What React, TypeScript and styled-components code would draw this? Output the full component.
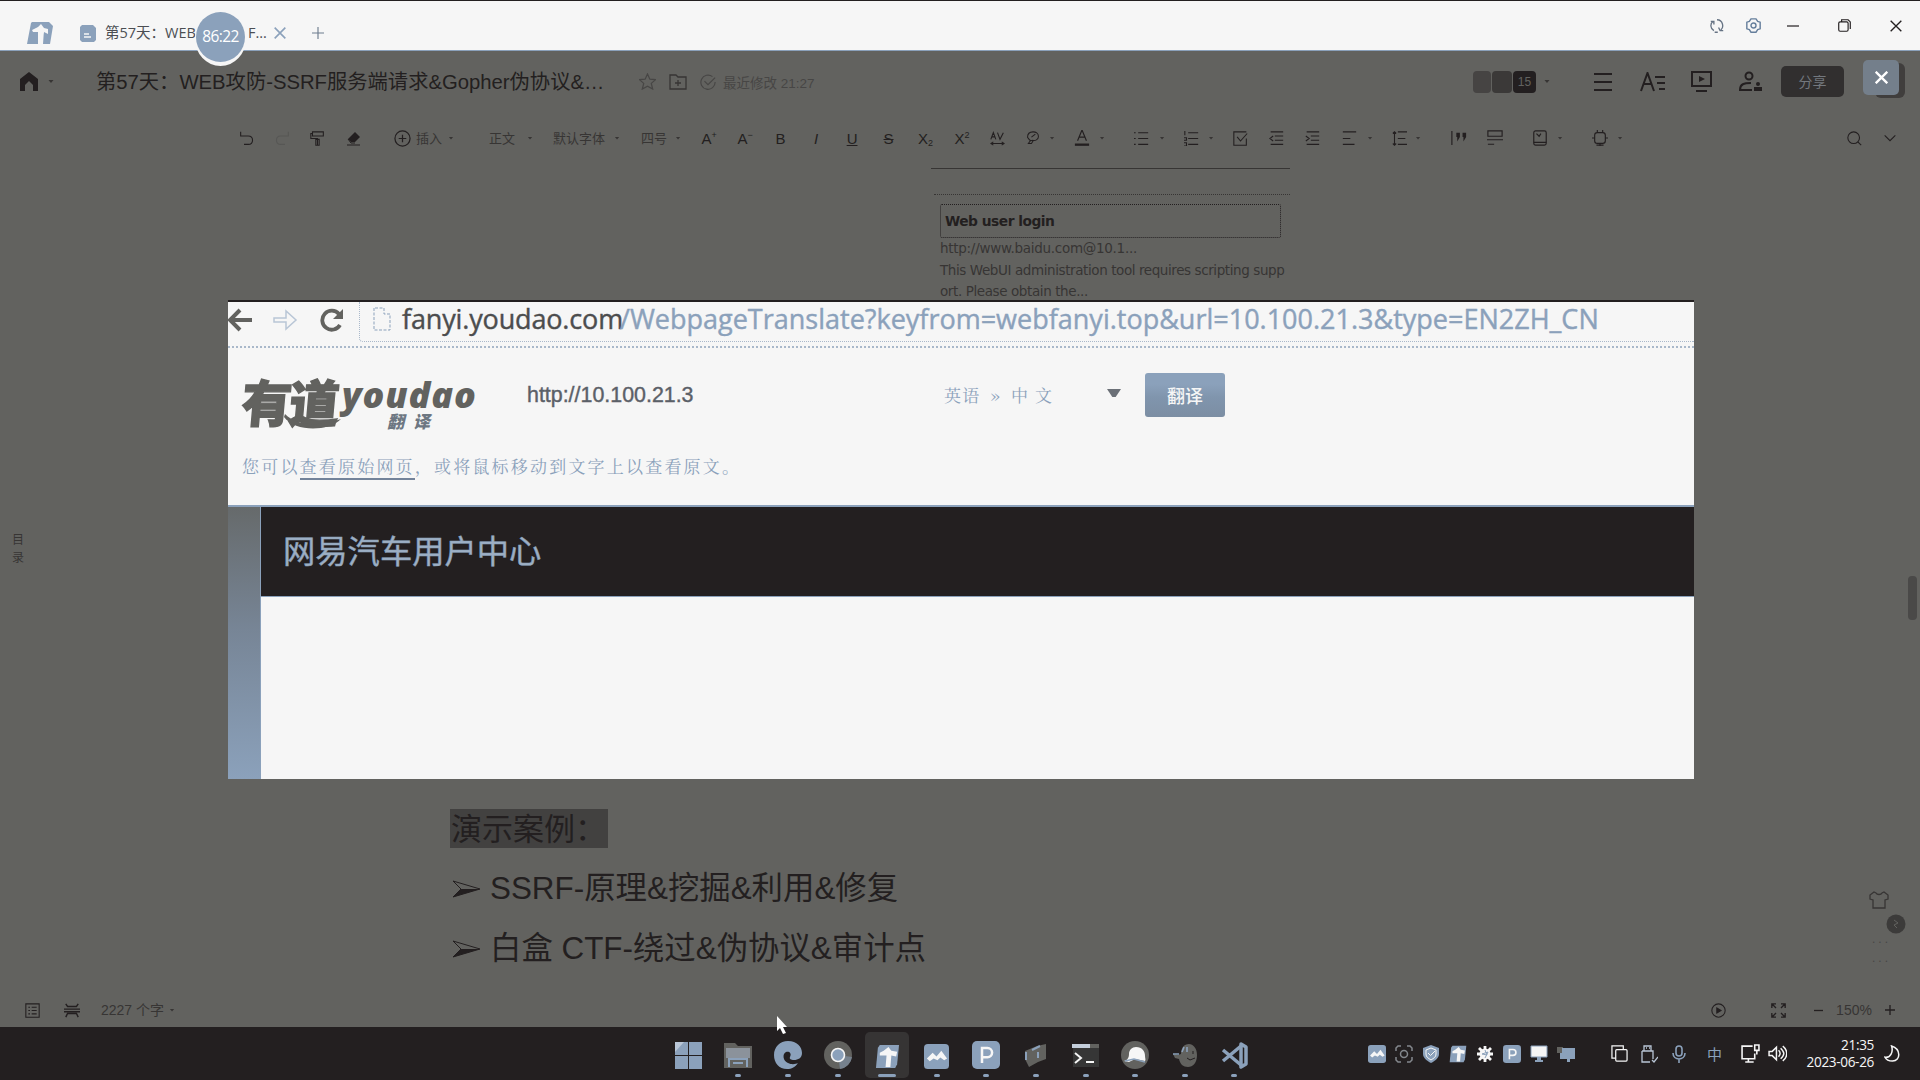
import React from "react";
import styled, { createGlobalStyle } from "styled-components";

const c = {
  ink: "#231f20",
  soft: "#373534",
  faint: "#474645",
  gray: "#62625f",
  blue: "#8ba1bb",
  light: "#f6f6f6",
  white: "#ffffff",
};
const cjk = `"Noto Sans CJK SC", sans-serif`;

const Global = createGlobalStyle`
  * { box-sizing: border-box; }
  html, body { margin: 0; padding: 0; overflow: hidden; background: ${c.gray}; }
  body { font-family: "Liberation Sans", ${cjk}; color: ${c.ink}; }
  svg { display: block; flex: none; }
`;

const Screen = styled.div`
  position: relative;
  width: 1920px;
  height: 1080px;
  display: flex;
  flex-direction: column;
  overflow: hidden;
  background: ${c.gray};
  white-space: nowrap;
`;

/* ---------- icon helper ---------- */
type IconProps = {
  w?: number;
  h?: number;
  box?: string;
  color?: string;
  stroke?: number;
  children: React.ReactNode;
};
const Icon = ({ w = 18, h, box = "0 0 18 18", color = c.ink, stroke = 1.3, children }: IconProps) => (
  <svg width={w} height={h ?? w} viewBox={box} fill="none" stroke={color} strokeWidth={stroke}>
    {children}
  </svg>
);
const Caret = styled.i<{ $gap?: number }>`
  width: 6px;
  height: 3px;
  margin-left: ${(p) => p.$gap ?? 0}px;
  flex: none;
  background: ${c.soft};
  clip-path: polygon(8% 0, 92% 0, 50% 100%);
`;

/* ---------- title bar ---------- */
const TitleBar = styled.header`
  display: flex;
  align-items: center;
  height: 51px;
  padding: 0 18px 0 27px;
  background: ${c.light};
  border-top: 1px solid ${c.ink};
  border-bottom: 1px solid ${c.blue};
`;
const Tab = styled.div`
  display: flex;
  align-items: center;
  margin: 15px 0 0 27px;
  font: 14.5px/20px "Open Sans", ${cjk};
  color: #4b4e53;
`;
const TabName = styled.span`
  width: 143px;
  margin-left: 9px;
`;
const TabTail = styled.span`
  width: 26px;
`;
const LogoBox = styled.div`
  margin-top: 14px;
`;
const PlusBox = styled.div`
  margin: 14px 0 0 26px;
`;
const WindowButtons = styled.div`
  display: flex;
  align-items: center;
  margin: 0 0 0 auto;
`;
const WinButton = styled.div<{ $w: number; $gap?: number }>`
  display: flex;
  justify-content: center;
  width: ${(p) => p.$w}px;
  margin-left: ${(p) => p.$gap ?? 0}px;
`;
const Timer = styled.div`
  position: absolute;
  left: 195px;
  top: 12px;
  width: 51px;
  height: 54px;
  border-radius: 50%;
  background: ${c.light};
  display: flex;
  justify-content: center;
`;
const TimerFace = styled.div`
  width: 49px;
  height: 50px;
  border-radius: 50%;
  background: ${c.blue};
  color: ${c.white};
  text-align: center;
  font: 15.5px/49px "Open Sans", sans-serif;
  letter-spacing: -0.6px;
`;

const TLogo = ({ size = 26, bg = c.blue, fg = c.light }) => (
  <svg width={size} height={size} viewBox="0 0 26 26">
    <path d="M5 1h20l-2 20-2 4H1L3 4z" fill={bg} />
    <path d="M5 9l4-2 5-4 3 4 6 1-1 5-5-1-1 12h-5l1-12H5z" fill={fg} />
  </svg>
);

/* ---------- document header ---------- */
const DocHeader = styled.div`
  display: flex;
  align-items: center;
  height: 61px;
  margin-bottom: 1px;
  padding: 0 76px 0 19px;
`;
const DocTitle = styled.h1`
  margin: 0 0 0 42px;
  width: 543px;
  font: 400 20.3px/28px "Liberation Sans", ${cjk};
`;
const Meta = styled.div`
  display: flex;
  align-items: center;
  gap: 13px;
  color: ${c.faint};
  font-size: 13.5px;
`;
const MetaText = styled.span`
  margin-left: -6px;
`;
const HeaderActions = styled.div`
  display: flex;
  align-items: center;
  margin-left: auto;
`;
const Avatar = styled.span<{ $tone: string; $w: number }>`
  width: ${(p) => p.$w}px;
  height: 22px;
  margin-right: 1px;
  border-radius: 4px;
  background: ${(p) => p.$tone};
  color: ${c.gray};
  text-align: center;
  font: 12px/22px "Liberation Sans", sans-serif;
`;
const ActionIcon = styled.span<{ $gap: number }>`
  display: flex;
  margin-left: ${(p) => p.$gap}px;
`;
const Share = styled.button`
  width: 63px;
  height: 31px;
  margin: 0 0 0 18px;
  padding: 0;
  border: 0;
  border-radius: 5px;
  background: #312f2f;
  color: #73787e;
  font: 14px/29px ${cjk};
`;
const CloseOverlay = styled.div`
  position: absolute;
  left: 1863px;
  top: 60px;
  width: 36px;
  height: 35px;
  border-radius: 5px;
  background: #747f8b;
  display: flex;
  align-items: center;
  justify-content: center;
`;
const AvatarEdge = styled.div`
  position: absolute;
  left: 1875px;
  top: 63px;
  width: 30px;
  height: 35px;
  border-radius: 6px;
  background: #403e3d;
`;

/* ---------- toolbar ---------- */
const Toolbar = styled.div`
  display: flex;
  align-items: center;
  height: 50px;
  padding: 0 12px 0 228px;
  font: 13px/18px ${cjk};
  color: ${c.soft};
`;
const Tool = styled.span<{ $gap?: number; $w?: number }>`
  display: flex;
  justify-content: center;
  align-items: center;
  width: ${(p) => p.$w ?? 36}px;
  margin-left: ${(p) => p.$gap ?? 0}px;
  flex: none;
`;
const ToolText = styled.span<{ $gap: number }>`
  margin-left: ${(p) => p.$gap}px;
`;
const Glyph = styled.span<{ $italic?: boolean; $line?: string }>`
  font: ${(p) => (p.$italic ? "italic" : "normal")} 400 15px/17px "Liberation Sans", sans-serif;
  text-decoration: ${(p) => p.$line ?? "none"};
  color: ${c.ink};
  sup, sub { font-size: 9px; line-height: 0; }
  sub { vertical-align: -2px; }
  sup { vertical-align: 6px; }
`;
const SearchGroup = styled.span`
  display: flex;
  margin-left: auto;
`;

/* ---------- page ---------- */
const Page = styled.main`
  display: flex;
  flex-direction: column;
  flex: 1;
`;
const LinkCards = styled.section`
  width: 359px;
  height: 646px;
  margin-left: 931px;
  font: 13.5px/21.5px "DejaVu Sans", sans-serif;
  color: ${c.soft};
`;
const CardEnd = styled.div`
  height: 6px;
  border-bottom: 1px solid ${c.soft};
`;
const Card = styled.article`
  margin: 25px 0 0 3px;
  padding: 9px 0 0 6px;
  border-top: 1px dotted ${c.soft};
`;
const CardTitle = styled.h2`
  width: 341px;
  height: 34px;
  margin: 0;
  padding-left: 4px;
  border: 1px dotted ${c.ink};
  border-radius: 2px;
  font: 700 13.8px/33px "DejaVu Sans", sans-serif;
  letter-spacing: -0.5px;
  color: ${c.ink};
`;
const CardLine = styled.p<{ $track: number }>`
  margin: 0;
  letter-spacing: ${(p) => p.$track}px;
`;
const Article = styled.section`
  padding-left: 450px;
`;
const Highlight = styled.h2`
  width: 158px;
  height: 39px;
  margin: 0 0 11px;
  padding-left: 1px;
  background: #424140;
  font: 400 31px/35px ${cjk};
`;
const Bullet = styled.div`
  display: flex;
  align-items: center;
  height: 60px;
  padding-left: 2px;
  gap: 9px;
  font: 400 31.4px/40px "Liberation Sans", ${cjk};
`;
const StatusBar = styled.footer`
  display: flex;
  align-items: center;
  height: 34px;
  padding: 0 25px 0 25px;
  font: 14px/20px "Liberation Sans", ${cjk};
  color: ${c.soft};
`;
const Count = styled.span`
  margin-left: 21px;
  letter-spacing: 0px;
`;
const Zoom = styled.div`
  display: flex;
  align-items: center;
  margin-left: auto;
`;
const Percent = styled.span`
  width: 44px;
  margin-left: 9px;
  text-align: center;
`;

/* ---------- floating parts ---------- */
const Outline = styled.nav`
  position: absolute;
  left: 2px;
  top: 523px;
  width: 32px;
  height: 50px;
  display: flex;
  flex-direction: column;
  align-items: center;
  justify-content: center;
  font: 12px/18px ${cjk};
  color: ${c.soft};
`;
const Thumb = styled.div`
  position: absolute;
  left: 1908px;
  top: 576px;
  width: 9px;
  height: 44px;
  border-radius: 4px;
  background: #4a4948;
`;
const Helpers = styled.aside`
  position: absolute;
  left: 1869px;
  top: 891px;
  width: 40px;
  height: 82px;
  display: flex;
  flex-direction: column;
`;
const GlobeBox = styled.div`
  margin: 5px 0 2px 17px;
`;
const Dots = styled.div`
  height: 27px;
  color: ${c.faint};
  font: 12px/6px "Liberation Sans", sans-serif;
  letter-spacing: 3px;
  padding-left: 3px;
`;
const Pointer = styled.div`
  position: absolute;
  left: 776px;
  top: 1015px;
`;

/* ---------- picture viewer ---------- */
const Viewer = styled.section`
  position: absolute;
  left: 228px;
  top: 300px;
  width: 1466px;
  height: 479px;
  border-top: 2px solid ${c.ink};
  background: ${c.light};
  display: flex;
  flex-direction: column;
`;
const AddressRow = styled.div`
  display: flex;
  align-items: center;
  height: 46px;
  padding-bottom: 4px;
  border-bottom: 2px dotted #a9b8ca;
`;
const NavIcons = styled.div`
  display: flex;
  align-items: center;
  gap: 21px;
  width: 131px;
  height: 40px;
  padding-bottom: 4px;
`;
const Address = styled.div`
  display: flex;
  align-items: center;
  flex: 1;
  height: 40px;
  padding: 0 0 5px 13px;
  border: 0 dotted #a9b8ca;
  border-width: 0 0 1px 1px;
  border-radius: 0 0 0 4px;
  color: ${c.blue};
  font: 27px/34px "Open Sans", sans-serif;
`;
const Host = styled.span`
  width: 218px;
  margin-left: 11px;
  color: #4c4d4e;
  letter-spacing: -0.15px;
  -webkit-text-stroke: 0.4px #4c4d4e;
`;
const Path = styled.span`
  letter-spacing: 0;
  -webkit-text-stroke: 0.4px ${c.blue};
`;
const YoudaoRow = styled.div`
  display: flex;
  align-items: flex-start;
  height: 104px;
  padding: 25px 0 0 14px;
`;
const Logo = styled.div`
  position: relative;
  display: flex;
  width: 285px;
  height: 62px;
  color: ${c.gray};
`;
const LogoCn = styled.span`
  font: 900 50px/55px ${cjk};
  letter-spacing: -2.5px;
  -webkit-text-stroke: 1.4px ${c.gray};
  width: 99px;
  height: 58px;
  transform: skewX(-5deg);
`;
const LogoEn = styled.span`
  margin: 5px 0 0 1px;
  height: 30px;
  font: italic 800 36px/34px "Open Sans", sans-serif;
  letter-spacing: 0.9px;
`;
const LogoSub = styled.span`
  position: absolute;
  left: 145px;
  top: 38px;
  font: italic 900 17px/20px ${cjk};
  letter-spacing: 9px;
  color: #6d7782;
`;
const Swoosh = styled.svg`
  position: absolute;
  left: 42px;
  top: 38px;
`;
const SiteUrl = styled.span`
  width: 404px;
  padding-top: 8px;
  font: 21.4px/28px "Liberation Sans", sans-serif;
  color: #5b6068;
  -webkit-text-stroke: 0.4px #5b6068;
`;
const Select = styled.div`
  display: flex;
  align-items: center;
  width: 200px;
  height: 44px;
  margin: 0 14px 0 0;
  padding: 0 10px 0 13px;
  color: ${c.blue};
  font: 17px/24px "Noto Serif CJK SC", ${cjk};
`;
const Option = styled.span<{ $gap?: number }>`
  margin-left: ${(p) => p.$gap ?? 0}px;
  letter-spacing: 1.3px;
`;
const Arrow = styled.i`
  width: 14px;
  height: 8px;
  margin: 0 0 4px auto;
  background: #6b7077;
  clip-path: polygon(0 0, 100% 0, 62% 100%, 38% 100%);
`;
const Translate = styled.button`
  width: 80px;
  height: 44px;
  margin: 0;
  padding: 0;
  border: 0;
  border-radius: 3px;
  background: linear-gradient(${c.blue} 25%, #8095ad 55%, #7c8ea3);
  color: ${c.light};
  font: 500 18px/41px ${cjk};
`;
const Hint = styled.p`
  height: 53px;
  margin: 0;
  padding: 0 0 0 14px;
  color: ${c.blue};
  font: 17px/28px "Noto Serif CJK SC", ${cjk};
  letter-spacing: 2.2px;
`;
const HintLink = styled.a`
  display: inline-block;
  height: 28px;
  border-bottom: 2px solid #73839a;
`;
const Site = styled.div`
  display: flex;
  flex: 1;
  border-top: 2px solid ${c.blue};
`;
const Side = styled.div`
  width: 33px;
  background: linear-gradient(#666a6b, #778596 45%, ${c.blue});
  border-right: 1px solid ${c.blue};
`;
const SiteBody = styled.div`
  flex: 1;
`;
const Banner = styled.h2`
  height: 90px;
  margin: 0;
  padding-left: 22px;
  background: ${c.ink};
  border-bottom: 1px solid ${c.blue};
  color: #9dafc4;
  font: 400 32.3px/84px ${cjk};
  -webkit-text-stroke: 0.5px #8ba1bb;
`;

/* ---------- taskbar ---------- */
const Taskbar = styled.footer`
  display: flex;
  align-items: center;
  height: 53px;
  padding: 0 19px 0 664px;
  background: ${c.ink};
`;
const AppSlot = styled.div`
  width: 49.6px;
  display: flex;
  justify-content: center;
  flex: none;
`;
const AppTile = styled.div<{ $active?: boolean }>`
  display: flex;
  flex-direction: column;
  align-items: center;
  justify-content: flex-end;
  width: 44px;
  height: 46px;
  margin-top: 2px;
  padding-bottom: 1px;
  border-radius: 5px;
  background: ${(p) => (p.$active ? "#363434" : "transparent")};
`;
const Mark = styled.i<{ $w: number }>`
  width: ${(p) => p.$w}px;
  height: 3px;
  margin-top: 5px;
  border-radius: 2px;
  background: ${(p) => (p.$w ? c.blue : "transparent")};
`;
const Tray = styled.div`
  display: flex;
  align-items: center;
  margin-left: 104px;
`;
const TrayItem = styled.span<{ $w: number }>`
  display: flex;
  justify-content: center;
  width: ${(p) => p.$w}px;
  color: ${c.blue};
  font: 15px/20px ${cjk};
`;
const SystemRow = styled.div`
  display: flex;
  align-items: center;
  margin-left: 25px;
`;
const Clock = styled.div`
  width: 84px;
  margin: -1px 10px 0 auto;
  color: ${c.light};
  text-align: right;
  font: 13.6px/17.5px "Open Sans", sans-serif;
  letter-spacing: -0.35px;
`;

type LinesProps = { d: string; w?: number; color?: string; s?: number };
const Lines = ({ d, w = 18, color = c.ink, s = 1.3 }: LinesProps) => (
  <Icon w={w} color={color} stroke={s}>
    <path d={d} />
  </Icon>
);

const PBadge = ({ size }: { size: number }) => (
  <svg width={size} height={size} viewBox="0 0 28 28" fill="none">
    <rect width="28" height="28" rx="5" fill={c.blue} />
    <path d="M10 22V7h5.500a4.600 4.600 0 010 9.200H10" stroke={c.light} strokeWidth="2.500" />
  </svg>
);
const Wave = ({ size }: { size: number }) => (
  <svg width={size} height={size} viewBox="0 0 26 26">
    <rect width="26" height="26" rx="4" fill={c.blue} />
    <path d="M3 15l6-6 4 4 5-6 6 8-3 2-4-3-3 3-4-2-4 3z" fill={c.light} />
  </svg>
);

const taskApps: { icon: React.ReactNode; mark: number; active?: boolean }[] = [
  {
    mark: 0,
    icon: (
      <svg width="27" height="27" viewBox="0 0 27 27" fill={c.blue}>
        <path d="M0 0h13v13H0zM14 0h13v13H14zM0 14h13v13H0zM14 14h13v13H14z" />
        <path d="M0 0h9L0 10z" fill="#b9c6d6" />
      </svg>
    ),
  },
  {
    mark: 6,
    icon: (
      <svg width="28" height="26" viewBox="0 0 28 26">
        <path d="M0 0h11l3 3h14v22H0z" fill={c.gray} />
        <path d="M2 5h24v10H2z" fill="#8b929b" />
        <path d="M5 24v-8h18v8M9 20h10" fill="none" stroke={c.blue} strokeWidth="2" />
      </svg>
    ),
  },
  {
    mark: 6,
    icon: (
      <svg width="28" height="28" viewBox="0 0 28 28">
        <path
          d="M14 0c9 0 14 6 14 12 0 5-4 7-8 7-3 0-5-1-4-3 2-4-1-6-4-5-4 2-3 9 2 11 4 2 8 1 10 0-3 4-6 6-11 6C5 28 0 22 0 14 0 6 6 0 14 0z"
          fill={c.blue}
        />
      </svg>
    ),
  },
  {
    mark: 6,
    icon: (
      <svg width="28" height="28" viewBox="0 0 28 28">
        <circle cx="14" cy="14" r="14" fill={c.gray} />
        <path d="M14 14l14 2a14 14 0 01-12 12z" fill="#76818d" />
        <circle cx="14" cy="14" r="6.500" fill={c.blue} stroke={c.light} strokeWidth="1.600" />
      </svg>
    ),
  },
  { mark: 18, active: true, icon: <TLogo size={25} /> },
  { mark: 6, icon: <Wave size={25} /> },
  { mark: 6, icon: <PBadge size={28} /> },
  {
    mark: 6,
    icon: (
      <svg width="26" height="26" viewBox="0 0 26 26">
        <path d="M2 8l12-5 9-2v15l-8 3-9 5-4-8z" fill={c.gray} />
        <path d="M3 9v8M9 7l8-4M15 9v6" stroke={c.blue} strokeWidth="2" />
      </svg>
    ),
  },
  {
    mark: 6,
    icon: (
      <svg width="28" height="26" viewBox="0 0 28 26" fill="none">
        <path d="M1 4h26v20H1z" fill="#363636" />
        <path d="M0 3h18" stroke="#c4cedb" strokeWidth="4" />
        <path d="M18 3h9" stroke={c.gray} strokeWidth="4" />
        <path d="M3 10l6 5-6 5M14 19h8" stroke={c.light} strokeWidth="2" />
      </svg>
    ),
  },
  {
    mark: 6,
    icon: (
      <svg width="28" height="28" viewBox="0 0 28 28">
        <circle cx="14" cy="14" r="14" fill={c.gray} />
        <path d="M3 20c4-1 5-4 5-7 0-4 3-7 7-7 6 0 9 4 9 9 0 2 1 4 0 5l-10-2-6 3z" fill={c.light} />
        <path d="M4 20l9-2 11 3" stroke={c.blue} fill="none" strokeWidth="1.500" />
      </svg>
    ),
  },
  {
    mark: 6,
    icon: (
      <svg width="26" height="26" viewBox="0 0 26 26">
        <path d="M1 11l5 1 3-1c0-6 3-10 8-10 4 0 8 4 8 11 0 8-4 12-9 12S8 21 7 16l-4-1z" fill={c.gray} />
        <path d="M1 11h6M12 4l-2 5M15 4v5" stroke={c.blue} strokeWidth="1.600" />
        <path d="M15 15l3 2 5-2M21 8v3" stroke={c.ink} fill="none" />
      </svg>
    ),
  },
  {
    mark: 6,
    icon: (
      <svg width="27" height="27" viewBox="0 0 27 27" fill="none" stroke={c.blue}>
        <path d="M2 8l18 15M2 19L20 4" strokeWidth="3.500" />
        <path d="M20 2l5 3v17l-5 3z" strokeWidth="3.500" strokeLinejoin="round" />
      </svg>
    ),
  },
];

const tray: React.ReactNode[] = [
  <Wave size={18} />,
  <Icon color="#84888d" stroke={1.5}>
    <path d="M1 6V3l2-2h3M12 1h3l2 2v3M17 12v3l-2 2h-3M6 17H3l-2-2v-3" />
    <circle cx="9" cy="9" r="3.500" />
  </Icon>,
  <svg width="18" height="18" viewBox="0 0 18 18">
    <path d="M9 0l8 3v6c0 4-4 7-8 9-4-2-8-5-8-9V3z" fill={c.blue} />
    <path d="M9 3l5 2v4c0 3-2 4-5 6-3-2-5-3-5-6V5zM6 8l2.500 2.500L13 6" fill="none" stroke={c.light} />
  </svg>,
  <TLogo size={18} />,
  <svg width="18" height="18" viewBox="0 0 18 18">
    <circle cx="9" cy="9" r="5.500" fill={c.light} />
    <path d="M9 1v16M1 9h16M3 3l12 12M15 3L3 15" stroke={c.light} strokeWidth="2.800" />
    <path d="M9 5l2 5-5-1 6-2-3 6" stroke={c.blue} fill="none" />
  </svg>,
  <PBadge size={18} />,
  <svg width="18" height="18" viewBox="0 0 18 18">
    <path d="M1 1h16v11H1z" fill={c.light} stroke={c.blue} />
    <path d="M7 12h4v3h2v2H5v-2h2z" fill={c.blue} />
  </svg>,
  <svg width="18" height="18" viewBox="0 0 18 18">
    <path d="M0 2h6v6H0z" fill={c.gray} />
    <path d="M5 3h13v11h-5v3h-3v-3H3V8h2z" fill={c.blue} />
  </svg>,
];

const Undo = ({ color = c.ink, flip = false }) => (
  <Icon w={15} color={color}>
    <g transform={flip ? "translate(18 0) scale(-1 1)" : undefined}>
      <path d="M2 1v5h5M2 6h9c7 0 7 10 0 10H6" />
    </g>
  </Icon>
);

const BulletArrow = () => (
  <svg width="29" height="18" viewBox="0 0 29 18">
    <path d="M1 1l27 8L1 17l8-8z" fill="none" stroke={c.ink} />
    <path d="M9 9h19L1 17z" fill={c.ink} />
  </svg>
);

export default function App() {
  return (
    <Screen>
      <Global />
      <TitleBar>
        <LogoBox>
          <svg width="26" height="24" viewBox="0 0 26 24">
            <path d="M5 1h17l4 4-3 18h-7l1-14h-5L11 23H0L4 2z" fill={c.blue} />
            <path d="M5 9l6-3 3-3 3 4 4 1v5l-4-2-1 2v11h-5V11H6z" fill={c.light} />
          </svg>
        </LogoBox>
        <Tab>
          <svg width="16" height="17" viewBox="0 0 16 17">
            <path d="M2 0h11l3 3v12l-2 2H2l-2-2V2z" fill={c.blue} />
            <path d="M4 9h5M4 12h7" stroke={c.light} strokeWidth="1.300" />
          </svg>
          <TabName>第57天：WEB</TabName>
          <TabTail>F...</TabTail>
          <Lines w={12} s={2.4} color={c.blue} d="M1 1l16 16M17 1L1 17" />
        </Tab>
        <PlusBox>
          <Lines w={12} s={1.7} color="#6d7c8e" d="M9 0v18M0 9h18" />
        </PlusBox>
        <WindowButtons>
          <WinButton $w={36}>
            <Lines w={14} color="#667384" s={1.7} d="M5 15C0 12 0 6 4 3M1 3h4v4M9 1c8 0 9 10 5 13M11 11l2 4h4M10 17H6" />
          </WinButton>
          <WinButton $w={36}>
            <Icon w={15} color="#667f9c" stroke={1.7}>
              <path d="M6 1h6l2 3 3 1v8l-3 1-2 3H6l-2-3-3-1V5l3-1z" />
              <circle cx="9" cy="9" r="3" />
            </Icon>
          </WinButton>
          <WinButton $w={43}>
            <Lines w={12} s={1.8} d="M0 9h18" />
          </WinButton>
          <WinButton $w={60}>
            <Icon w={13} stroke={1.6}>
              <rect x="1" y="4" width="13" height="13" rx="2" />
              <path d="M5 4V1h9l3 3v10" />
            </Icon>
          </WinButton>
          <WinButton $w={13} $gap={15}>
            <Lines w={12} s={2} d="M1 1l16 16M17 1L1 17" />
          </WinButton>
        </WindowButtons>
      </TitleBar>

      <DocHeader>
        <svg width="20" height="19" viewBox="0 0 20 19" fill={c.ink}>
          <path d="M10 0l9 7v12h-5v-6l-4-4-4 4v6H1V7z" />
        </svg>
        <Caret $gap={9} />
        <DocTitle>第57天：WEB攻防-SSRF服务端请求&amp;Gopher伪协议&amp;…</DocTitle>
        <Meta>
          <Lines w={17} color={c.faint} d="M9 1l2.500 5.500 6 .5-4.500 4 1.500 6L9 14l-5.500 3L5 11 .5 7l6-.5z" />
          <Icon w={18} color={c.soft}>
            <path d="M1 2h6l2 2h8v12H1zM9 7v6M6 10h6" />
          </Icon>
          <Lines w={16} color={c.faint} d="M14 3a8 8 0 103 6M5 8l4 4 8-8" />
          <MetaText>最近修改 21:27</MetaText>
        </Meta>
        <HeaderActions>
          <Avatar $tone="#464443" $w={18} />
          <Avatar $tone="#3b3938" $w={20} />
          <Avatar $tone={c.ink} $w={23}>15</Avatar>
          <Caret $gap={7} />
          <ActionIcon $gap={44}>
            <Lines w={18} s={2} d="M0 1h18M0 9h18M0 17h18" />
          </ActionIcon>
          <ActionIcon $gap={28}>
            <Icon w={25} h={20} box="0 0 25 20" stroke={2}>
              <path d="M1 19L7.500 1 14 19M4 12h7M15 5h10M17 11h8M19 17h6" />
            </Icon>
          </ActionIcon>
          <ActionIcon $gap={26}>
            <Icon w={21} h={21} box="0 0 21 21" stroke={2}>
              <path d="M1 1h19v14H1zM5 20h11" />
              <path d="M8 5l6 3-6 3z" fill={c.ink} stroke="none" />
            </Icon>
          </ActionIcon>
          <ActionIcon $gap={27}>
            <Icon w={24} h={21} box="0 0 24 21" stroke={2}>
              <circle cx="10" cy="5" r="3.500" />
              <path d="M13 19H1c0-6 4-7 11-7" />
              <path d="M15 20v-4h8v4z" fill={c.ink} stroke="none" />
              <circle cx="19" cy="13" r="2" fill={c.ink} stroke="none" />
            </Icon>
          </ActionIcon>
          <Share>分享</Share>
        </HeaderActions>
      </DocHeader>

      <Toolbar>
        <Tool><Undo /></Tool>
        <Tool><Undo color="#575755" flip /></Tool>
        <Tool $w={35}>
          <Lines w={15} d="M3 1h13v5H3zM3 3H1v6h8v8M7 10h4v7H7z" />
        </Tool>
        <Tool>
          <svg width="15" height="15" viewBox="0 0 15 15">
            <path d="M9 1l5 5-5 5H5L2 8z" fill={c.ink} />
            <path d="M2 8l3 4h4M1 14h13" stroke={c.ink} fill="none" />
          </svg>
        </Tool>
        <Tool $w={18} $gap={22}>
          <Icon w={17}><circle cx="9" cy="9" r="8" /><path d="M9 5v8M5 9h8" /></Icon>
        </Tool>
        <ToolText $gap={5}>插入</ToolText><Caret $gap={6} />
        <ToolText $gap={35}>正文</ToolText><Caret $gap={12} />
        <ToolText $gap={20}>默认字体</ToolText><Caret $gap={9} />
        <ToolText $gap={21}>四号</ToolText><Caret $gap={8} />
        <Tool $gap={10}><Glyph>A<sup>+</sup></Glyph></Tool>
        <Tool><Glyph>A<sup>−</sup></Glyph></Tool>
        <Tool $w={35}><Glyph>B</Glyph></Tool>
        <Tool><Glyph $italic>I</Glyph></Tool>
        <Tool><Glyph $line="underline">U</Glyph></Tool>
        <Tool $w={37}><Glyph $line="line-through">S</Glyph></Tool>
        <Tool $w={37}><Glyph>X<sub>2</sub></Glyph></Tool>
        <Tool><Glyph>X<sup>2</sup></Glyph></Tool>
        <Tool $w={35}>
          <Lines w={15} d="M1 10l3-8 3 8M2 7h4M9 2l3 8 4-8M1 15h16M4 13l-3 2 3 2M14 13l3 2-3 2" />
        </Tool>
        <Tool><Lines w={14} d="M5 12L2 8c0-9 14-9 14-1 0 3-3 6-8 5M3 16l3-4 3 1-2 3zM7 8l5-4" /></Tool>
        <Caret $gap={-2} />
        <Tool $gap={9}>
          <Icon w={16}><path d="M4 12L9 0l5 12M6 8h6" /><path d="M1 16.500h16" strokeWidth="2.600" /></Icon>
        </Tool>
        <Caret $gap={-1} />
        <Tool $gap={18}><Lines w={15} d="M5 2h12M5 9h12M5 16h12M0 2h2M0 9h2M0 16h2" /></Tool>
        <Caret />
        <Tool $gap={8}><Lines w={15} d="M5 2h12M5 9h12M5 16h12M1 0v5M0 8h3v3H0M0 14h3v4H0" /></Tool>
        <Caret $gap={-1} />
        <Tool $gap={8}><Lines w={15} d="M16 9v8H1V1h15M5 7l4 5 8-9" /></Tool>
        <Tool><Lines w={15} d="M2 1h15M7 6h10M7 11h10M2 16h15M5 6L1 9l4 3" /></Tool>
        <Tool><Lines w={15} d="M2 1h15M7 6h10M7 11h10M2 16h15M1 6l4 3-4 3" /></Tool>
        <Tool $gap={1}><Lines w={15} d="M1 1h16M1 9h9M1 16h14" /></Tool>
        <Caret />
        <Tool $gap={8}><Lines w={15} d="M7 1h11M7 9h9M7 16h11M3 1v16M1 3l2-2 2 2M1 15l2 2 2-2" /></Tool>
        <Caret $gap={-2} />
        <Tool $gap={20}>
          <Icon w={16}>
            <path d="M1 1v16" />
            <path d="M6 3h4v5l-3 5V8H6zM13 3h4v5l-3 5V8h-1z" fill={c.ink} stroke="none" />
          </Icon>
        </Tool>
        <Tool $w={35}><Lines w={16} d="M1 1h16v6H1zM0 11h18M1 16h7" /></Tool>
        <Tool $gap={10}>
          <Icon w={16}><rect x="2" y="1" width="14" height="16" rx="2" /><path d="M2 14h14M5 4l3 3 2-3" /></Icon>
        </Tool>
        <Caret $gap={-1} />
        <Tool $gap={19}>
          <Icon w={16}><rect x="3" y="3" width="12" height="12" rx="3" /><path d="M0 9h3M15 9h3M6 3V0M12 3V0M9 15v3M5 17h8" /></Icon>
        </Tool>
        <Caret $gap={-1} />
        <SearchGroup>
          <Tool><Icon w={15}><circle cx="8" cy="8" r="7" /><path d="M13 13l4 4" /></Icon></Tool>
          <Tool><Lines w={12} s={1.6} d="M1 5l8 8 8-8" /></Tool>
        </SearchGroup>
      </Toolbar>

      <Page>
        <LinkCards>
          <CardEnd />
          <Card>
            <CardTitle>Web user login</CardTitle>
            <CardLine $track={-0.28}>http://www.baidu.com@10.1...</CardLine>
            <CardLine $track={-0.41}>This WebUI administration tool requires scripting supp</CardLine>
            <CardLine $track={-0.4}>ort. Please obtain the...</CardLine>
          </Card>
        </LinkCards>
        <Article>
          <Highlight>演示案例：</Highlight>
          <Bullet>
            <BulletArrow />
            SSRF-原理&amp;挖掘&amp;利用&amp;修复
          </Bullet>
          <Bullet>
            <BulletArrow />
            白盒 CTF-绕过&amp;伪协议&amp;审计点
          </Bullet>
        </Article>
      </Page>

      <StatusBar>
        <Lines w={15} d="M1 1h16v16H1zM4 5h2M8 5h6M4 9h2M8 9h6M4 13h2M8 13h6" />
        <ActionIcon $gap={24}>
          <Lines w={16} s={1.6} d="M2 2l2 3h10l2-3M0 8h18M0 11h18M2 17l2-4h10l2 4" />
        </ActionIcon>
        <Count>2227 个字</Count>
        <Caret $gap={5} />
        <Zoom>
          <Icon w={15}><circle cx="9" cy="9" r="8" /><path d="M7 6l5 3-5 3z" fill={c.ink} /></Icon>
          <ActionIcon $gap={45}>
            <Lines w={15} s={1.6} d="M1 6V1h5M1 1l5 5M17 6V1h-5M17 1l-5 5M1 12v5h5M1 17l5-5M17 12v5h-5M17 17l-5-5" />
          </ActionIcon>
          <ActionIcon $gap={28}><Lines w={9} s={2.6} d="M0 9h18" /></ActionIcon>
          <Percent>150%</Percent>
          <ActionIcon $gap={9}><Lines w={10} s={2.4} d="M0 9h18M9 0v18" /></ActionIcon>
        </Zoom>
      </StatusBar>

      <Taskbar>
        {taskApps.map((app, i) => (
          <AppSlot key={i}>
            <AppTile $active={app.active}>
              {app.icon}
              <Mark $w={app.mark} />
            </AppTile>
          </AppSlot>
        ))}
        <Tray>
          {tray.map((icon, i) => (
            <TrayItem key={i} $w={27}>{icon}</TrayItem>
          ))}
        </Tray>
        <SystemRow>
          <TrayItem $w={30}>
            <Icon w={17} color={c.light}><rect x="5" y="5" width="12" height="12" rx="1" /><path d="M5 14H1V1h12v4" /></Icon>
          </TrayItem>
          <TrayItem $w={29}>
            <Icon color="#b9c6d6"><path d="M4 6V1h7v5M2 6h11v8M10 17H2V6M12 15l2 2 4-5M6 3h1M9 3h1" /></Icon>
          </TrayItem>
          <TrayItem $w={31}>
            <Icon color={c.blue} stroke={1.6}><rect x="6" y="1" width="6" height="10" rx="3" /><path d="M3 8c0 8 12 8 12 0M9 14v4" /></Icon>
          </TrayItem>
          <TrayItem $w={41}>中</TrayItem>
          <TrayItem $w={31}>
            <Icon w={19} color={c.light} stroke={1.5}><path d="M11 2H1v12h12V9M4 17h8M7 14v3M13 1h4v5h-4zM15 6v4" /></Icon>
          </TrayItem>
          <TrayItem $w={23}>
            <Icon w={19} color={c.light} stroke={1.4}><path d="M1 7h3l4-4v12l-4-4H1zM10 6c2 2 2 4 0 6M12 4c4 4 4 6 0 10M14 2c5 4 5 10 0 14" /></Icon>
          </TrayItem>
        </SystemRow>
        <Clock>
          21:35
          <br />
          2023-06-26
        </Clock>
        <Lines w={17} color={c.light} s={1.6} d="M8 1c10 3 10 16 1 16-4 0-7-2-8-4 6 1 9-6 7-12z" />
      </Taskbar>

      <Outline>
        <span>目</span>
        <span>录</span>
      </Outline>
      <Thumb />
      <Helpers>
        <Icon w={20} h={18} box="0 0 20 18" color={c.soft}>
          <path d="M7 2L5 1 1 4v4l3 1v8h12V9l3-1V4l-4-3-2 1c-1 2-5 2-6 0z" />
        </Icon>
        <GlobeBox>
          <svg width="20" height="20" viewBox="0 0 20 20">
            <circle cx="10" cy="10" r="9.500" fill="#3c3b3a" />
            <path d="M8 6l4 3-4 2 3 3" stroke={c.gray} fill="none" />
          </svg>
        </GlobeBox>
        <Dots>...</Dots>
        <Dots>...</Dots>
      </Helpers>

      <Viewer>
        <AddressRow>
          <NavIcons>
            <Icon w={24} h={24} box="0 0 24 24" color={c.gray} stroke={4}>
              <path d="M24 12H3M12 2L2 12l10 10" />
            </Icon>
            <Icon w={26} h={24} box="0 0 26 24" color="#b9c6d6" stroke={1.5}>
              <path d="M1 10h12V3l10 9-10 9v-7H1z" />
            </Icon>
            <Icon w={24} h={24} box="0 0 24 24" color={c.gray} stroke={3.8}>
              <path d="M20 17a9.500 9.500 0 11-1-11" />
              <path d="M23 1v10H13z" fill={c.gray} stroke="none" />
            </Icon>
          </NavIcons>
          <Address>
            <Icon w={18} h={24} box="0 0 18 24" color={c.blue} stroke={1}>
              <path d="M1 1v22h16V7h-6V1z" strokeDasharray="3 1.500" />
            </Icon>
            <Host>fanyi.youdao.com</Host>
            <Path>/WebpageTranslate?keyfrom=webfanyi.top&amp;url=10.100.21.3&amp;type=EN2ZH_CN</Path>
          </Address>
        </AddressRow>
        <YoudaoRow>
          <Logo>
            <LogoCn>有道</LogoCn>
            <LogoEn>youdao</LogoEn>
            <LogoSub>翻译</LogoSub>
            <Swoosh width="60" height="18" viewBox="0 0 60 18">
              <path d="M1 3c12 12 34 13 56 5-13 13-46 13-57-2z" fill={c.gray} />
            </Swoosh>
          </Logo>
          <SiteUrl>http://10.100.21.3</SiteUrl>
          <Select>
            <Option>英语</Option>
            <Option $gap={10}>»</Option>
            <Option $gap={10}>中 文</Option>
            <Arrow />
          </Select>
          <Translate>翻译</Translate>
        </YoudaoRow>
        <Hint>
          您可以<HintLink>查看原始网页</HintLink>，或将鼠标移动到文字上以查看原文。
        </Hint>
        <Site>
          <Side />
          <SiteBody>
            <Banner>网易汽车用户中心</Banner>
          </SiteBody>
        </Site>
      </Viewer>

      <Timer>
        <TimerFace>86:22</TimerFace>
      </Timer>
      <AvatarEdge />
      <CloseOverlay>
        <Lines w={13} color={c.white} s={3.2} d="M1 1l16 16M17 1L1 17" />
      </CloseOverlay>
      <Pointer>
        <svg width="12" height="20" viewBox="0 0 12 20">
          <path d="M1 1v15l3-3 3 6 3-1-3-6h4z" fill={c.white} />
        </svg>
      </Pointer>
    </Screen>
  );
}
